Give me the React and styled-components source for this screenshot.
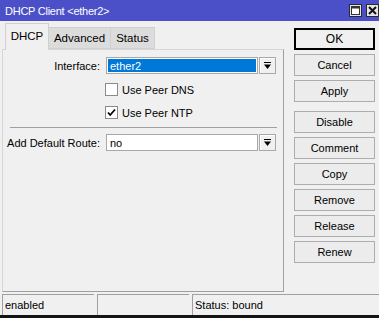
import styled, { createGlobalStyle } from 'styled-components';

const GlobalStyle = createGlobalStyle`
  body {
    margin: 0;
    background: #f0f0f0;
    font-family: "Liberation Sans", Arial, sans-serif;
    font-size: 11px;
    color: #000;
  }
`;

const tabs = [
  { label: 'DHCP', width: 44, active: true },
  { label: 'Advanced', width: 62 },
  { label: 'Status', width: 44 },
];

const buttons = [
  { label: 'OK', primary: true },
  { label: 'Cancel' },
  { label: 'Apply' },
  { label: 'Disable', spaced: true },
  { label: 'Comment' },
  { label: 'Copy' },
  { label: 'Remove' },
  { label: 'Release' },
  { label: 'Renew' },
];

const DropIcon = () => (
  <svg width="9" height="9" viewBox="0 0 9 9">
    <rect x="1" y="1" width="7" height="1" fill="#000" />
    <polygon points="1,3.5 8,3.5 4.5,8" fill="#000" />
  </svg>
);

const CheckIcon = () => (
  <svg width="11" height="11" viewBox="0 0 11 11">
    <polyline points="2,5.5 4.2,8 9,2.5" fill="none" stroke="#000" strokeWidth="1.8" />
  </svg>
);

const App = () => {
  return (
    <Window>
      <GlobalStyle />
      <TitleBar>
        <span>DHCP Client &lt;ether2&gt;</span>
        <TitleButtons>
          <TitleBtn>
            <svg width="9" height="9" viewBox="0 0 9 9">
              <rect x="0.5" y="0.5" width="8" height="8" fill="#fff" stroke="#333" />
              <rect x="0.5" y="0.5" width="8" height="2" fill="#333" />
            </svg>
          </TitleBtn>
          <TitleBtn>
            <svg width="9" height="9" viewBox="0 0 9 9">
              <path d="M1 1 L8 8 M8 1 L1 8" stroke="#111" strokeWidth="2" />
            </svg>
          </TitleBtn>
        </TitleButtons>
      </TitleBar>

      <Body>
        <LeftCol>
          <TabRow>
            {tabs.map((t) => (
              <Tab key={t.label} $active={t.active} $width={t.width}>
                {t.label}
              </Tab>
            ))}
          </TabRow>
          <Panel>
            <FieldRow $top={7}>
              <Label>Interface:</Label>
              <Select $selected>ether2</Select>
              <DropButton>
                <DropIcon />
              </DropButton>
            </FieldRow>

            <CheckRow $top={9}>
              <CheckBox />
              <span>Use Peer DNS</span>
            </CheckRow>
            <CheckRow $top={10}>
              <CheckBox>
                <CheckIcon />
              </CheckBox>
              <span>Use Peer NTP</span>
            </CheckRow>

            <Separator />

            <FieldRow $top={6}>
              <Label>Add Default Route:</Label>
              <Select>no</Select>
              <DropButton>
                <DropIcon />
              </DropButton>
            </FieldRow>
          </Panel>
        </LeftCol>

        <RightCol>
          {buttons.map((b) => (
            <Button key={b.label} $primary={b.primary} $spaced={b.spaced}>
              {b.label}
            </Button>
          ))}
        </RightCol>
      </Body>

      <StatusBar>
        <StatusCell $width={92}>enabled</StatusCell>
        <StatusCell $width={92}></StatusCell>
        <StatusCell>Status: bound</StatusCell>
      </StatusBar>
    </Window>
  );
};

const Window = styled.div`
  width: 379px;
  height: 318px;
  box-sizing: border-box;
  display: flex;
  flex-direction: column;
  background: #f0f0f0;
  border-bottom: 3px solid #141414;
  overflow: hidden;
`;

const TitleBar = styled.div`
  height: 21px;
  flex-shrink: 0;
  display: flex;
  align-items: center;
  padding-left: 5px;
  background: #4c50c8;
  color: #fff;
  font-size: 11px;
  letter-spacing: -0.25px;
`;

const TitleButtons = styled.div`
  margin-left: auto;
  align-self: flex-start;
  margin-top: 4px;
  display: flex;
  gap: 4px;
`;

const TitleBtn = styled.div`
  width: 13px;
  height: 13px;
  box-sizing: border-box;
  border: 1px solid #2a2a2a;
  background: #e6e6e6;
  display: flex;
  align-items: center;
  justify-content: center;
`;

const Body = styled.div`
  flex: 1;
  display: flex;
  min-height: 0;
`;

const LeftCol = styled.div`
  width: 284px;
  padding-left: 2px;
  box-sizing: border-box;
  display: flex;
  flex-direction: column;
`;

const TabRow = styled.div`
  height: 28px;
  display: flex;
  align-items: flex-end;
  padding-left: 3px;
  position: relative;
  z-index: 1;
`;

const Tab = styled.div`
  box-sizing: border-box;
  width: ${(p) => p.$width}px;
  height: ${(p) => (p.$active ? '27px' : '22px')};
  margin-bottom: ${(p) => (p.$active ? '-1px' : '0')};
  padding-top: ${(p) => (p.$active ? '6px' : '4px')};
  text-align: center;
  background: ${(p) => (p.$active ? '#f0f0f0' : '#dcdcdc')};
  border: 1px solid #d0d0d0;
  border-bottom: ${(p) => (p.$active ? 'none' : '1px solid #d0d0d0')};
  border-left: ${(p) => (p.$active ? '1px solid #d0d0d0' : 'none')};
  font-size: 11.5px;
`;

const Panel = styled.div`
  height: 243px;
  box-sizing: border-box;
  border: 1px solid #d6d6d6;
  border-right-color: #a0a0a0;
  border-bottom-color: #a0a0a0;
  display: flex;
  flex-direction: column;
`;

const FieldRow = styled.div`
  display: flex;
  align-items: center;
  height: 17px;
  margin-top: ${(p) => p.$top}px;
`;

const Label = styled.div`
  width: 97px;
  text-align: right;
  margin-right: 6px;
  white-space: nowrap;
  font-size: 11px;
`;

const Select = styled.div`
  width: 152px;
  height: 17px;
  box-sizing: border-box;
  border: 1px solid #a8a8a8;
  background: ${(p) => (p.$selected ? '#0078d7' : '#fff')};
  color: ${(p) => (p.$selected ? '#fff' : '#000')};
  box-shadow: ${(p) => (p.$selected ? 'inset 0 0 0 1px #fff' : 'none')};
  padding-left: 3px;
  display: flex;
  align-items: center;
  font-size: 11px;
`;

const DropButton = styled.div`
  width: 17px;
  height: 17px;
  margin-left: 1px;
  box-sizing: border-box;
  border: 1px solid #a8a8a8;
  background: #f0f0f0;
  box-shadow: inset 1px 1px 0 #fff;
  display: flex;
  align-items: center;
  justify-content: center;
`;

const CheckRow = styled.div`
  display: flex;
  align-items: center;
  height: 13px;
  padding-left: 102px;
  margin-top: ${(p) => p.$top}px;
  font-size: 11px;
`;

const CheckBox = styled.div`
  width: 13px;
  height: 13px;
  box-sizing: border-box;
  border: 1px solid #8a8a8a;
  background: #fff;
  margin-right: 4px;
  display: flex;
  align-items: center;
  justify-content: center;
`;

const Separator = styled.div`
  margin: 8px 6px 0 7px;
  border-top: 1px solid #a0a0a0;
`;

const RightCol = styled.div`
  flex: 1;
  display: flex;
  flex-direction: column;
  gap: 4px;
  padding: 7px 4px 0 10px;
`;

const Button = styled.div`
  height: 22px;
  box-sizing: border-box;
  border: ${(p) => (p.$primary ? '2px solid #000' : '1px solid #adadad')};
  background: ${(p) => (p.$primary ? '#f0f0f0' : '#ececec')};
  margin-top: ${(p) => (p.$spaced ? '5px' : '0')};
  display: flex;
  align-items: center;
  justify-content: center;
  font-size: ${(p) => (p.$primary ? '12px' : '11px')};
`;

const StatusBar = styled.div`
  height: 22px;
  box-sizing: border-box;
  padding: 1px 0 0 2px;
  display: flex;
  gap: 3px;
`;

const StatusCell = styled.div`
  ${(p) => (p.$width ? `width: ${p.$width}px;` : 'flex: 1;')}
  box-sizing: border-box;
  border-top: 1px solid #a0a0a0;
  border-left: 1px solid #a0a0a0;
  padding-left: 2px;
  display: flex;
  align-items: center;
  font-size: 11px;
`;

export default App;
